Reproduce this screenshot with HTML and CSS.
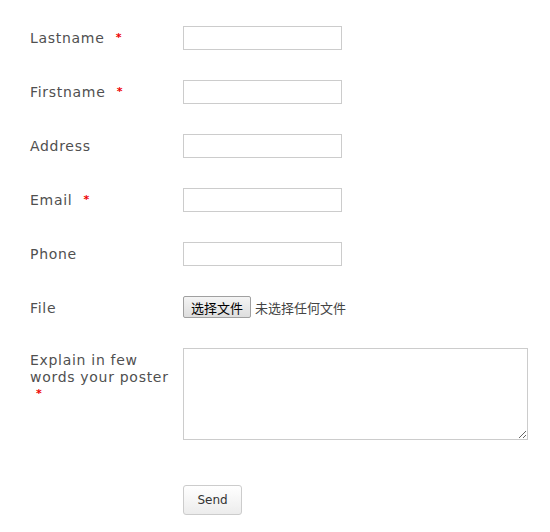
FILE: index.html
```html
<!DOCTYPE html>
<html lang="en">
<head>
    <meta charset="UTF-8">
    <meta name="viewport" content="width=device-width, initial-scale=1.0">
    <title>Poster form</title>
    <link rel="stylesheet" href="styles.css">
</head>
<body>

    <form class="poster-form">
        <div class="row">
            <label class="label" for="lastname">Lastname <span class="req">*</span></label>
            <input class="field" type="text" id="lastname">
        </div>
        <div class="row">
            <label class="label" for="firstname">Firstname <span class="req">*</span></label>
            <input class="field" type="text" id="firstname">
        </div>
        <div class="row">
            <label class="label" for="address">Address</label>
            <input class="field" type="text" id="address">
        </div>
        <div class="row">
            <label class="label" for="email">Email <span class="req">*</span></label>
            <input class="field" type="text" id="email">
        </div>
        <div class="row">
            <label class="label" for="phone">Phone</label>
            <input class="field" type="text" id="phone">
        </div>
        <div class="row">
            <label class="label">File</label>
            <div class="file-pick">
                <button type="button" class="file-btn">选择文件</button>
                <span class="file-name">未选择任何文件</span>
            </div>
        </div>
        <div class="row">
            <label class="label" for="explain">Explain in few words your poster<br><span class="req">*</span></label>
            <textarea class="area" id="explain"></textarea>
        </div>
        <div class="row submit-row">
            <button type="submit" class="send">Send</button>
        </div>
    </form>

</body>
</html>
```

FILE: styles.css
```css
body {
    margin: 0;
    padding: 0;
    background-color: #fff;
    font-family: 'DejaVu Sans', Verdana, sans-serif;
    color: #505050;
}
.poster-form {
    padding: 26px 0 0 30px;
}
.row {
    display: flex;
    align-items: flex-start;
    margin-bottom: 30px;
}
.label {
    width: 147px;
    flex: none;
    margin-right: 6px;
    padding-top: 4px;
    font-size: 14px;
    line-height: 17px;
    letter-spacing: 0.7px;
}
.req {
    color: #e00;
    font-weight: bold;
    font-size: 11px;
    margin-left: 6px;
    vertical-align: top;
    position: relative;
    top: -1px;
}
.field {
    box-sizing: border-box;
    width: 159px;
    height: 24px;
    margin: 0;
    border: 1px solid #ccc;
    background-color: #fff;
}
.file-pick {
    display: flex;
    align-items: center;
    height: 22px;
    font-family: 'Noto Sans CJK SC', sans-serif;
    font-size: 13px;
}
.file-btn {
    box-sizing: border-box;
    height: 22px;
    width: 68px;
    margin: 0 4px 0 0;
    padding: 0;
    border: 1px solid #a0a0a0;
    border-radius: 2px;
    background: linear-gradient(#f4f4f4, #dedede);
    font-family: 'Noto Sans CJK SC', sans-serif;
    font-size: 13px;
    color: #000;
}
.file-name {
    color: #444;
}
.area {
    box-sizing: border-box;
    width: 345px;
    height: 92px;
    margin: 0;
    border: 1px solid #ccc;
}
.submit-row {
    padding-left: 153px;
    margin-top: 45px;
}
.send {
    box-sizing: border-box;
    width: 59px;
    height: 30px;
    border: 1px solid #ccc;
    border-radius: 3px;
    background: linear-gradient(#fff, #ececec);
    font-family: 'DejaVu Sans', sans-serif;
    font-size: 12px;
    color: #333;
}
```
